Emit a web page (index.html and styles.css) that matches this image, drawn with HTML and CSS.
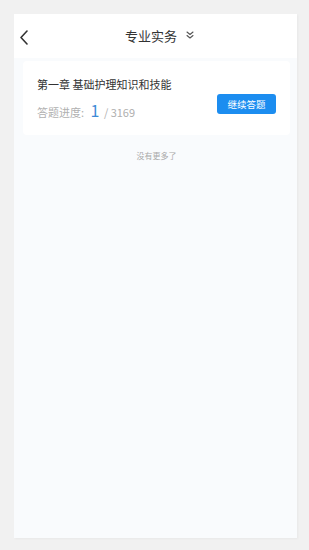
FILE: index.html
```
<!DOCTYPE html>
<html>
<head>
<meta charset="utf-8">
<meta name="viewport" content="width=device-width, initial-scale=1">
<title>专业实务</title>
<link rel="stylesheet" href="styles.css">
</head>
<body>
<div class="phone">
<header class="topbar">
<a class="back" href="#"><svg width="10" height="16" viewBox="0 0 10 16"><path d="M8 2 L2 8.5 L8 15" fill="none" stroke="#333" stroke-width="1.6" stroke-linecap="round" stroke-linejoin="round"/></svg></a>
<h1 class="title">专业实务<svg class="more" width="8" height="9" viewBox="0 0 8 9"><path d="M1 1 L4 3.5 L7 1 M1 4.5 L4 7 L7 4.5" fill="none" stroke="#555" stroke-width="1.1" stroke-linecap="round" stroke-linejoin="round"/></svg></h1>
</header>
<div class="content">
<div class="card">
<div class="chapter">第一章 基础护理知识和技能</div>
<div class="row">
<div class="progress">答题进度: <b class="done">1</b> / 3169</div>
<a class="btn" href="#">继续答题</a>
</div>
</div>
<p class="nomore">没有更多了</p>
</div>
</div>
</body>
</html>
```
FILE: styles.css
```
html,body{margin:0;padding:0;}
body{background:#f1f1f1;font-family:"Noto Sans CJK SC","Noto Sans",sans-serif;}
.phone{margin:14px 12px 12px 14px;height:524px;background:#f9fbfd;display:flex;flex-direction:column;box-shadow:1px 1px 2px rgba(0,0,0,.04);}
.topbar{height:44px;background:#fff;display:flex;align-items:center;position:relative;}
.back{position:absolute;left:5px;top:12px;display:block;}
.title{flex:1;text-align:center;margin:0;line-height:18px;font-size:13px;font-weight:normal;color:#333;padding-left:8px;}
.title .more{margin-left:9px;vertical-align:1px;}
.content{padding:3px 7px 0 9px;}
.card{background:#fff;border-radius:4px;padding:15px 14px 13px 14px;}
.chapter{font-size:11px;color:#333;line-height:16px;}
.row{display:flex;align-items:center;justify-content:space-between;margin-top:6px;}
.progress{font-size:11px;color:#b0b0b0;}
.done{font-weight:normal;font-size:16px;color:#3d8ad6;margin:0 2px 0 4px;}
.btn{display:block;background:#1c8df0;color:#fff;font-size:9.5px;text-decoration:none;width:59px;height:20px;line-height:20px;text-align:center;border-radius:3px;margin-top:-13px;}
.nomore{text-align:center;font-size:8px;color:#aaa;margin:15px 0 0;}
```
